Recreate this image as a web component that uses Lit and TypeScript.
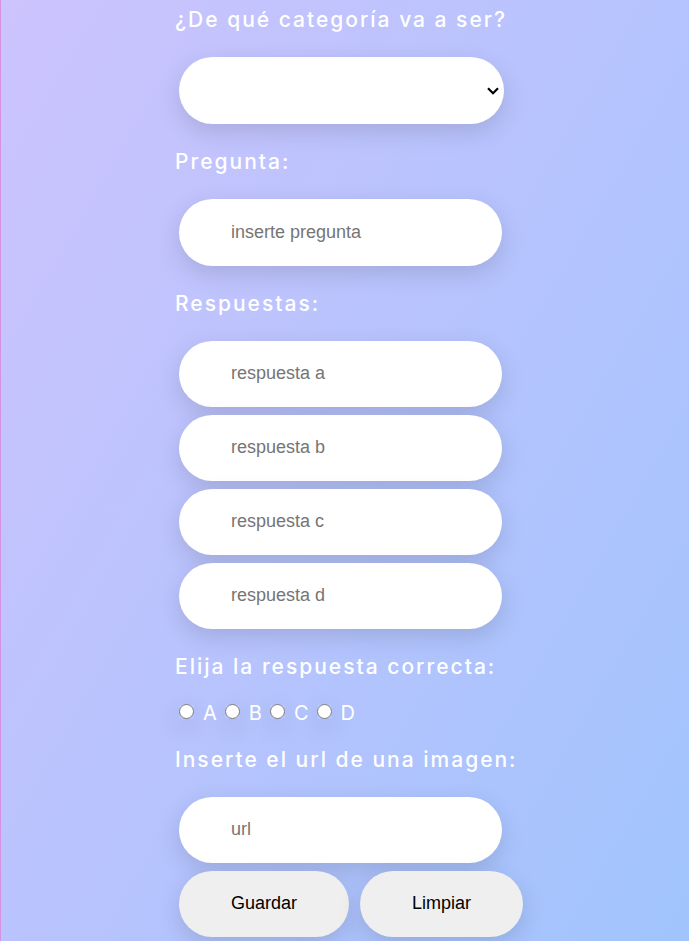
import { LitElement, html, css } from "lit";
import { customElement } from "lit/decorators.js";

@customElement("app-root")
export class AppRoot extends LitElement {
  static styles = css`
    :host {
      display: block;
      min-height: 100vh;
      box-sizing: border-box;
      border-left: 1px solid #d492e0;
      background: linear-gradient(120deg, #cdc3fd 0%, #a1c4fd 100%);
      overflow: hidden;
      font-family: Inter, sans-serif;
      color: #fff;
    }
    form {
      box-sizing: border-box;
      max-width: 356px;
      margin: 0 auto;
      padding: 0 0 4px 8px;
    }
    fieldset {
      min-width: 0;
      margin: 0;
      padding: 0;
      border: 0;
    }
    .title {
      display: block;
      padding: 26px 0 25px;
      font-size: 21px;
      line-height: 24px;
      font-weight: 500;
      letter-spacing: 2px;
      white-space: nowrap;
    }
    .first {
      padding-top: 8px;
    }
    .field,
    .button {
      display: block;
      box-sizing: border-box;
      height: 66px;
      padding: 0 52px 2px;
      border: 0;
      border-radius: 34px;
      background: #fff;
      box-shadow: 0 8px 24px rgba(0, 0, 0, 0.13);
      font: 18px "Liberation Sans", Arial, sans-serif;
      color: #000;
    }
    .field {
      width: 323px;
    }
    .tall {
      height: 67px;
      padding-bottom: 0;
    }
    .field::placeholder {
      color: #757575;
    }
    .stack {
      display: flex;
      flex-direction: column;
      gap: 8px;
      padding-left: 4px;
    }
    .select {
      display: grid;
      align-items: center;
      width: 325px;
      margin-left: 4px;
    }
    .select .field {
      grid-area: 1 / 1;
      appearance: none;
      width: 100%;
    }
    .chevron {
      grid-area: 1 / 1;
      justify-self: end;
      margin-right: 5px;
      pointer-events: none;
    }
    .options {
      display: flex;
      align-items: center;
      gap: 8px;
      height: 18px;
      padding-left: 4px;
    }
    .option {
      display: flex;
      align-items: center;
      gap: 9px;
      font-size: 20px;
      line-height: 18px;
    }
    .radio {
      width: 15px;
      height: 15px;
      margin: 0 0 3px;
      box-shadow: 0 8px 24px rgba(0, 0, 0, 0.13);
    }
    .buttons {
      display: flex;
      gap: 11px;
    }
    .button {
      background: #efefef;
    }
  `;

  render() {
    return html`
      <form>
        <label class="title first" for="categoria">¿De qué categoría va a ser?</label>
        <div class="select">
          <select class="field tall" id="categoria">
            <option></option>
          </select>
          <svg class="chevron" width="12" height="8" viewBox="0 0 12 8" aria-hidden="true">
            <path d="M1 1.2 L6 6.2 L11 1.2" fill="none" stroke="#000" stroke-width="2.2" />
          </svg>
        </div>

        <label class="title" for="pregunta">Pregunta:</label>
        <div class="stack">
          <input class="field tall" id="pregunta" type="text" placeholder="inserte pregunta" />
        </div>

        <fieldset>
          <legend class="title">Respuestas:</legend>
          <div class="stack">
            ${["a", "b", "c", "d"].map(
              (letter) => html`<input
                class="field"
                type="text"
                aria-label="respuesta ${letter}"
                placeholder="respuesta ${letter}"
              />`
            )}
          </div>
        </fieldset>

        <fieldset>
          <legend class="title">Elija la respuesta correcta:</legend>
          <div class="options">
            ${["A", "B", "C", "D"].map(
              (letter) => html`<label class="option">
                <input class="radio" type="radio" name="correcta" value=${letter} />${letter}
              </label>`
            )}
          </div>
        </fieldset>

        <label class="title" for="url">Inserte el url de una imagen:</label>
        <div class="stack">
          <input class="field" id="url" type="text" placeholder="url" />
          <div class="buttons">
            <button class="button" type="button">Guardar</button>
            <button class="button" type="reset">Limpiar</button>
          </div>
        </div>
      </form>
    `;
  }
}
